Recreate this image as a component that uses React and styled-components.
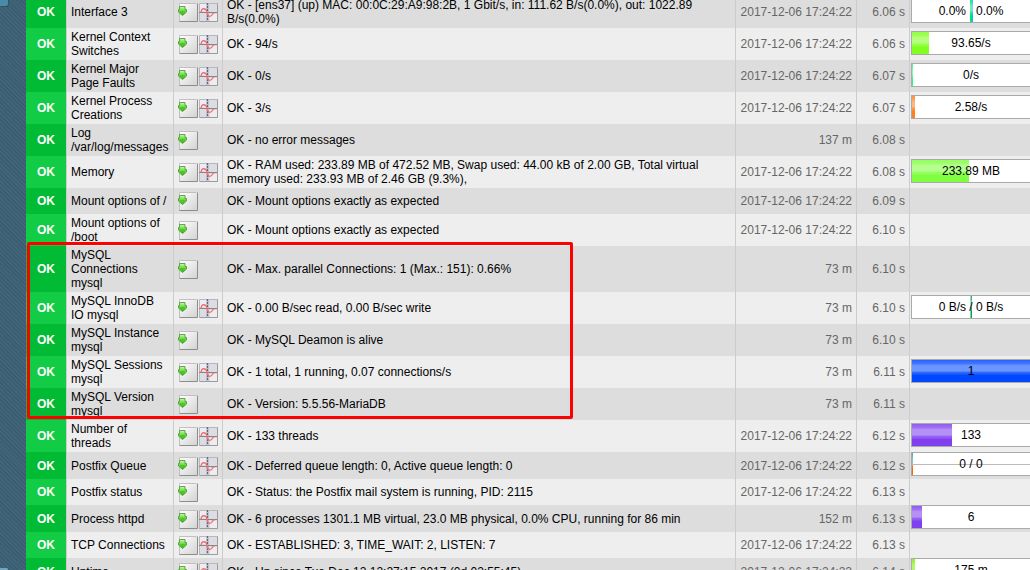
import React from "react";
import styled, { createGlobalStyle } from "styled-components";

const GlobalStyle = createGlobalStyle`
  * { box-sizing: border-box; }
  body {
    margin: 0;
    background: #3d6175;
    color: #000;
    font: 12px/14px "Liberation Sans", Arial, Helvetica, sans-serif;
  }
`;

const Page = styled.div`
  display: flex;
  height: 100vh;
  overflow: hidden;
`;

const Sidebar = styled.aside`
  display: flex;
  flex-direction: column;
  justify-content: space-between;
  align-items: flex-start;
  flex: 0 0 26px;
  background: repeating-linear-gradient(45deg, #3b5d71 0 1px, #426679 2px 3px);
`;

const SnapinEdge = styled.div`
  width: 9px;
  height: ${(p) => (p.$end ? 2 : 7)}px;
  background: ${(p) => (p.$end ? "#6fa5bd" : "#4a8aa8")};
  border-right: 1px solid #2d5468;
  border-bottom: ${(p) => (p.$end ? 0 : 1)}px solid #2d5468;
  border-radius: ${(p) => (p.$end ? "0 3px 0 0" : "0 0 3px 0")};
`;

const Main = styled.main`
  position: relative;
  flex: 1;
  min-width: 0;
`;

const ServiceTable = styled.table`
  width: calc(100% + 3px);
  margin-top: -4px;
  table-layout: fixed;
  border-collapse: separate;
  border-spacing: 0;
`;

const Row = styled.tr`
  background: ${(p) => (p.$odd ? "#ddd" : "#eee")};
`;

const Cell = styled.td`
  height: 26px;
  padding: 2px 4px;
  border-left: 1px solid #ccc;
  vertical-align: middle;
`;

const StateCell = styled.td`
  padding: 0;
  background: ${(p) => (p.$odd ? "#00bb33" : "#11cc44")};
  color: #fff;
  font-weight: bold;
  text-align: center;
`;

const TimeCell = styled(Cell)`
  color: #666;
  text-align: right;
  white-space: nowrap;
`;

const PerfCell = styled(Cell)`
  padding: 0 1px;
  padding-bottom: ${(p) => (p.$filled ? 3 : 0)}px;
`;

const Icons = styled.div`
  display: flex;
`;

const IconButton = styled.button`
  display: block;
  width: 20px;
  height: 20px;
  padding: 0;
  border: 0;
  background: none;
`;

const Meter = styled.div`
  display: grid;
  width: 120px;
  height: 24px;
  border: 1px solid #aaa;
  background: #fff;
  text-align: center;

  > * { grid-area: 1 / 1; }
`;

const Fill = styled.div`
  width: ${(p) => p.$size}px;
  margin-left: ${(p) => p.$start || 0}px;
  background:
    linear-gradient(
      rgba(255, 255, 255, 0.15),
      rgba(255, 255, 255, 0.25) 16%,
      rgba(255, 255, 255, 0.42) 26%,
      rgba(255, 255, 255, 0.42) 50%,
      rgba(255, 255, 255, 0.18) 56%,
      rgba(255, 255, 255, 0.12) 64%,
      transparent 68%
    ),
    ${(p) => p.$color};
`;

const Divider = styled.div`
  align-self: center;
  height: 1px;
  background: #bbb;
`;

const MeterText = styled.span`
  align-self: center;
  white-space: pre;
`;

const Highlight = styled.div`
  position: absolute;
  top: 242px;
  left: 1px;
  width: 546px;
  height: 177px;
  border: 3px solid #f00;
  border-radius: 2px;
  pointer-events: none;
`;

function MenuIcon() {
  return (
    <svg width="20" height="20" viewBox="0 0 20 20" aria-hidden="true">
      <defs>
        <linearGradient id="paper" x2="1" y2="1">
          <stop offset="0" stopColor="#fff" />
          <stop offset="1" stopColor="#d2d2d2" />
        </linearGradient>
        <linearGradient id="arrow" x2="0" y2="1">
          <stop offset="0" stopColor="#d8f0c8" />
          <stop offset=".4" stopColor="#7fdc4c" />
          <stop offset="1" stopColor="#2fae10" />
        </linearGradient>
      </defs>
      <path d="M2 1.5h17.500v18H2z" fill="url(#paper)" />
      <path d="M1.500 19.500v-18h17" fill="none" stroke="#c0c0c0" />
      <path d="M1.500 19.500h18v-18" fill="none" stroke="#8c8c8c" />
      <path d="M1.500 4.500h5.500v3h1.500v2.500l-4 3.500L.500 10V7.500h1z" fill="url(#arrow)" stroke="#4aa03a" strokeWidth=".9" />
      <path d="M1.500 9h6L4.500 12z" fill="#46cc1c" />
    </svg>
  );
}

function GraphIcon() {
  return (
    <svg width="20" height="20" viewBox="0 0 20 20" aria-hidden="true">
      <path d="M1.500 1.500h18v18h-18z" fill="#dcdce2" stroke="#b8b8bc" />
      <path d="M2 2h6v7H2zM12 12h7v7h-7z" fill="#ececf1" />
      <path d="M9.500 2v17" stroke="#bfc0cc" strokeWidth="3" />
      <path d="M9.500 1v18" stroke="#5c6478" strokeDasharray="2 1" />
      <path d="M1 10.500h18" stroke="#858585" />
      <path d="M3 10.500c.500-5 5-5 6 0s4 5 6 1l2-1" fill="none" stroke="#f07070" strokeWidth="1.300" />
      <path d="M1.500 19.500h18v-18" fill="none" stroke="#9c9c9c" />
    </svg>
  );
}

const rows = [
  { name: "Interface 3", graph: true, output: "OK - [ens37] (up) MAC: 00:0C:29:A9:98:2B, 1 Gbit/s, in: 111.62 B/s(0.0%), out: 1022.89 B/s(0.0%)", age: "2017-12-06 17:24:22", checked: "6.06 s", perf: { text: "0.0%   0.0%", fills: [[58, 2, "#00e676"], [60, 1, "#22aaff"]] } },
  { name: "Kernel Context Switches", graph: true, output: "OK - 94/s", age: "2017-12-06 17:24:22", checked: "6.06 s", perf: { text: "93.65/s", fills: [[0, 17, "#80ff20"]] } },
  { name: "Kernel Major Page Faults", graph: true, output: "OK - 0/s", age: "2017-12-06 17:24:22", checked: "6.07 s", perf: { text: "0/s", fills: [[0, 1, "#20ff80"]] } },
  { name: "Kernel Process Creations", graph: true, output: "OK - 3/s", age: "2017-12-06 17:24:22", checked: "6.07 s", perf: { text: "2.58/s", fills: [[0, 3, "#ff8020"]] } },
  { name: "Log /var/log/messages", output: "OK - no error messages", age: "137 m", checked: "6.08 s" },
  { name: "Memory", graph: true, output: "OK - RAM used: 233.89 MB of 472.52 MB, Swap used: 44.00 kB of 2.00 GB, Total virtual memory used: 233.93 MB of 2.46 GB (9.3%),", age: "2017-12-06 17:24:22", checked: "6.08 s", perf: { text: "233.89 MB", fills: [[0, 57, "#80ff40"]] } },
  { name: "Mount options of /", output: "OK - Mount options exactly as expected", age: "2017-12-06 17:24:22", checked: "6.09 s" },
  { name: "Mount options of /boot", output: "OK - Mount options exactly as expected", age: "2017-12-06 17:24:22", checked: "6.10 s" },
  { name: "MySQL Connections mysql", output: "OK - Max. parallel Connections: 1 (Max.: 151): 0.66%", age: "73 m", checked: "6.10 s" },
  { name: "MySQL InnoDB IO mysql", graph: true, output: "OK - 0.00 B/sec read, 0.00 B/sec write", age: "73 m", checked: "6.10 s", perf: { text: "0 B/s / 0 B/s", fills: [[58, 1, "#60e0a0"], [59, 1, "#249070"]] } },
  { name: "MySQL Instance mysql", output: "OK - MySQL Deamon is alive", age: "73 m", checked: "6.10 s" },
  { name: "MySQL Sessions mysql", graph: true, output: "OK - 1 total, 1 running, 0.07 connections/s", age: "73 m", checked: "6.11 s", perf: { text: "1", fills: [[0, 118, "#0048ff"]] } },
  { name: "MySQL Version mysql", output: "OK - Version: 5.5.56-MariaDB", age: "73 m", checked: "6.11 s" },
  { name: "Number of threads", graph: true, output: "OK - 133 threads", age: "2017-12-06 17:24:22", checked: "6.12 s", perf: { text: "133", fills: [[0, 40, "#8040f0"]] } },
  { name: "Postfix Queue", graph: true, output: "OK - Deferred queue length: 0, Active queue length: 0", age: "2017-12-06 17:24:22", checked: "6.12 s", perf: { text: "0 / 0", split: true, fills: [[0, 1, "linear-gradient(#3399aa 50%, #ff6600 50%)"]] } },
  { name: "Postfix status", output: "OK - Status: the Postfix mail system is running, PID: 2115", age: "2017-12-06 17:24:22", checked: "6.13 s" },
  { name: "Process httpd", graph: true, output: "OK - 6 processes 1301.1 MB virtual, 23.0 MB physical, 0.0% CPU, running for 86 min", age: "152 m", checked: "6.13 s", perf: { text: "6", fills: [[0, 10, "#8040f0"]] } },
  { name: "TCP Connections", graph: true, output: "OK - ESTABLISHED: 3, TIME_WAIT: 2, LISTEN: 7", age: "2017-12-06 17:24:22", checked: "6.13 s" },
  { name: "Uptime", graph: true, output: "OK - Up since Tue Dec 12 12:27:15 2017 (0d 02:55:45)", age: "2017-12-06 17:24:22", checked: "6.14 s", perf: { text: "175 m", fills: [[0, 3, "#80f000"]] } },
];

function Perfometer({ text, fills, split }) {
  return (
    <Meter>
      {fills.map(([start, size, color]) => (
        <Fill key={start} $start={start} $size={size} $color={color} />
      ))}
      {split && <Divider />}
      <MeterText>{text}</MeterText>
    </Meter>
  );
}

export default function App() {
  return (
    <>
      <GlobalStyle />
      <Page>
        <Sidebar>
          <SnapinEdge />
          <SnapinEdge $end />
        </Sidebar>
        <Main>
          <ServiceTable>
            <colgroup>
              <col width="40" />
              <col width="107" />
              <col width="49" />
              <col />
              <col width="121" />
              <col width="53" />
              <col width="124" />
            </colgroup>
            <tbody>
              {rows.map((r, i) => {
                const odd = i % 2 === 0;
                return (
                  <Row key={r.name} $odd={odd}>
                    <StateCell $odd={odd}>OK</StateCell>
                    <Cell>{r.name}</Cell>
                    <Cell>
                      <Icons>
                        <IconButton type="button" aria-label="Service menu"><MenuIcon /></IconButton>
                        {r.graph && <IconButton type="button" aria-label="Service graphs"><GraphIcon /></IconButton>}
                      </Icons>
                    </Cell>
                    <Cell>{r.output}</Cell>
                    <TimeCell>{r.age}</TimeCell>
                    <TimeCell>{r.checked}</TimeCell>
                    <PerfCell $filled={!!r.perf}>{r.perf && <Perfometer {...r.perf} />}</PerfCell>
                  </Row>
                );
              })}
            </tbody>
          </ServiceTable>
          <Highlight />
        </Main>
      </Page>
    </>
  );
}
